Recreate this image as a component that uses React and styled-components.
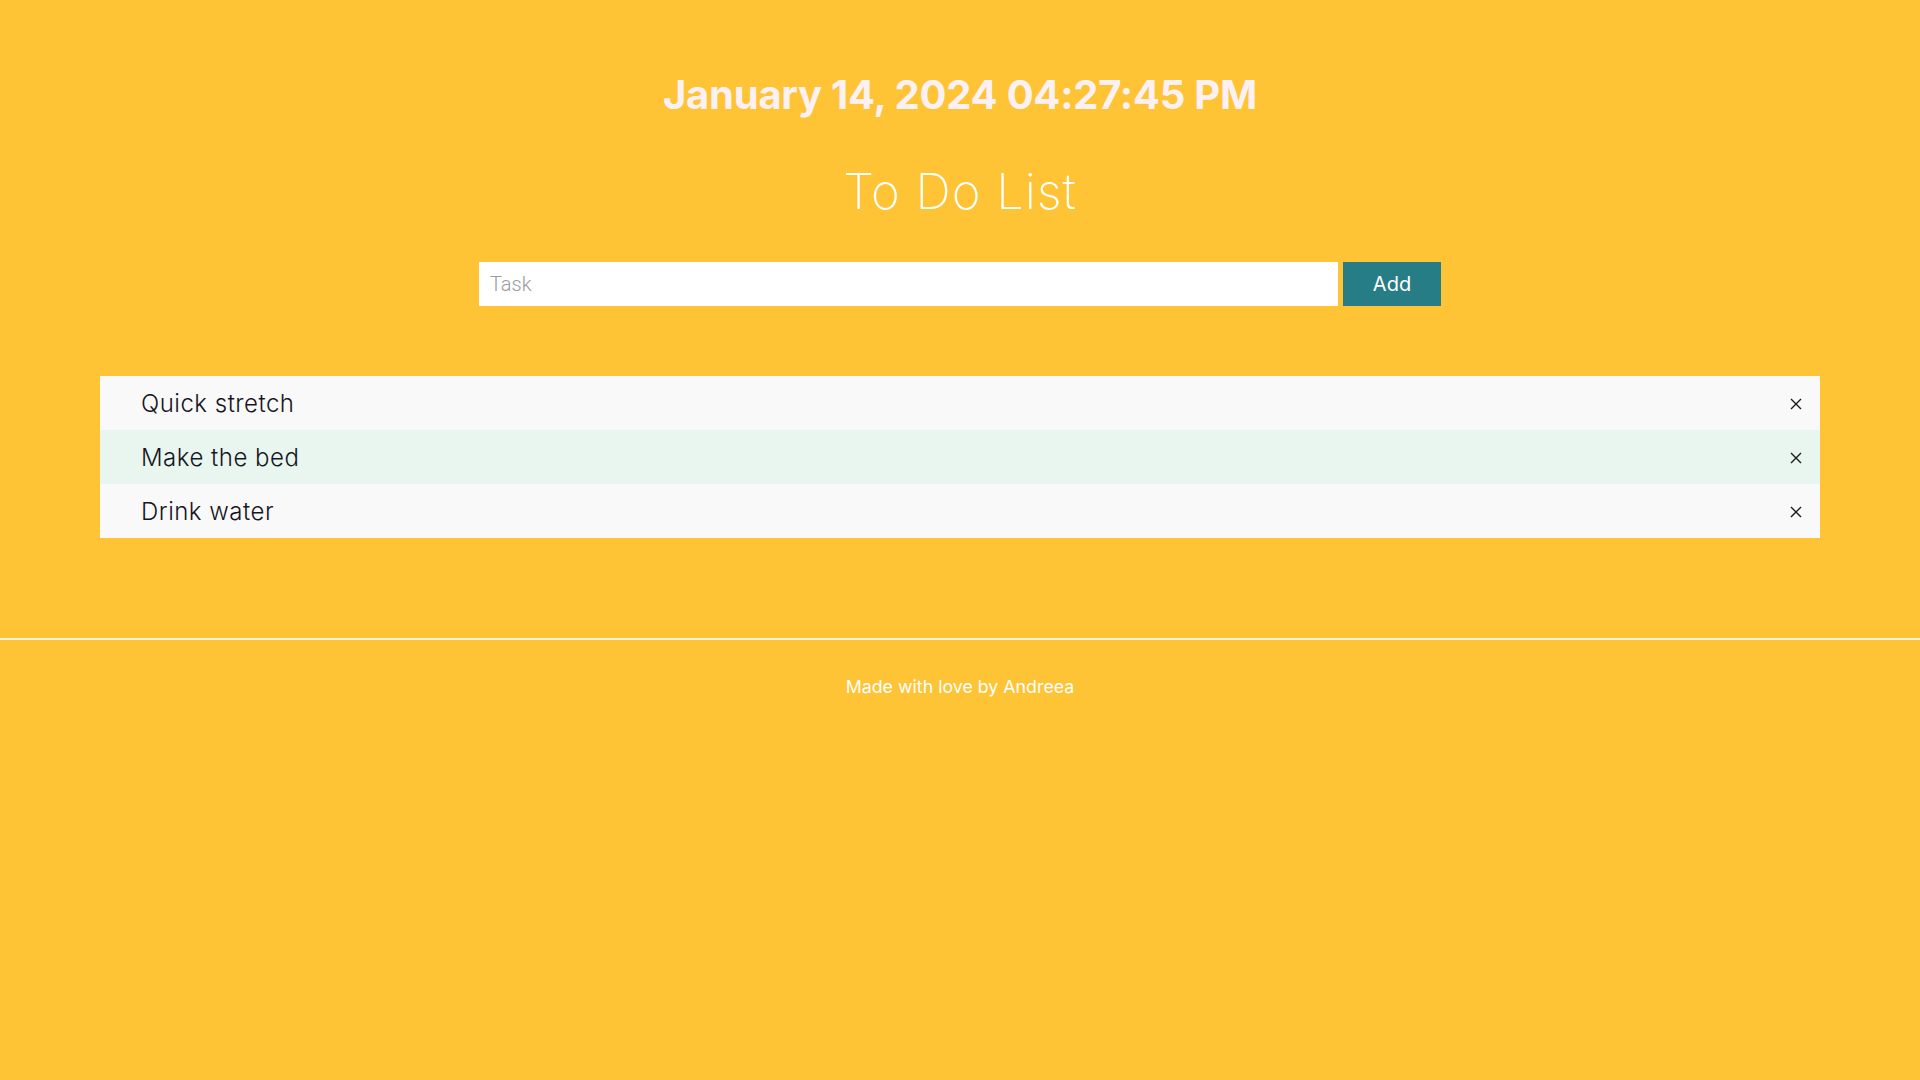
import React from "react";
import styled, { createGlobalStyle } from "styled-components";

const GlobalStyle = createGlobalStyle`
  body {
    margin: 0;
    background: #ffc436;
    font-family: Inter, "Noto Sans", sans-serif;
  }
`;

const tasks = ["Quick stretch", "Make the bed", "Drink water"];

const App = () => {
  return (
    <>
      <GlobalStyle />
      <Page>
        <DateTime>January 14, 2024 04:27:45 PM</DateTime>
        <Title>To Do List</Title>
        <Form>
          <TaskInput placeholder="Task" />
          <AddButton>Add</AddButton>
        </Form>
        <List>
          {tasks.map((task, i) => (
            <Row key={task} $alt={i % 2 === 1}>
              <span>{task}</span>
              <Remove aria-label="remove">
                <svg width="12" height="12" viewBox="0 0 12 12">
                  <path d="M1 1L11 11M11 1L1 11" stroke="#1b1b1b" strokeWidth="1.4" />
                </svg>
              </Remove>
            </Row>
          ))}
        </List>
      </Page>
      <Divider />
      <Footer>Made with love by Andreea</Footer>
    </>
  );
};

const Page = styled.div`
  padding: 71px 100px 100px;
  display: flex;
  flex-direction: column;
  align-items: center;
`;

const DateTime = styled.h2`
  margin: 0;
  font-family: Inter, sans-serif;
  font-weight: 700;
  font-size: 40px;
  line-height: 48px;
  letter-spacing: -0.25px;
  color: #fbf1f5;
`;

const Title = styled.h1`
  margin: 43px 0 0;
  font-family: Inter, sans-serif;
  font-weight: 200;
  font-size: 49px;
  line-height: 60px;
  letter-spacing: 1px;
  color: #ffffff;
`;

const Form = styled.div`
  margin-top: 40px;
  display: flex;
  gap: 5px;
`;

const TaskInput = styled.input`
  width: 859px;
  height: 44px;
  box-sizing: border-box;
  border: none;
  outline: none;
  padding: 0 11px;
  font-family: Roboto, sans-serif;
  font-weight: 300;
  font-size: 20px;
  color: #333;
  background: #ffffff;
  &::placeholder {
    color: #9a9a9a;
  }
`;

const AddButton = styled.button`
  width: 98px;
  height: 44px;
  border: none;
  background: #267d86;
  color: #ffffff;
  font-family: Inter, sans-serif;
  font-size: 20px;
  cursor: pointer;
`;

const List = styled.ul`
  list-style: none;
  margin: 70px 0 0;
  padding: 0;
  width: 100%;
`;

const Row = styled.li`
  height: 54px;
  display: flex;
  align-items: center;
  justify-content: space-between;
  padding: 0 18px 0 41px;
  background: ${(p) => (p.$alt ? "#e8f6ef" : "#f9f9f9")};
  font-family: Inter, sans-serif;
  font-weight: 300;
  font-size: 24px;
  letter-spacing: 0.5px;
  color: #16161f;
`;

const Remove = styled.button`
  border: none;
  background: none;
  padding: 0;
  margin-top: 2px;
  width: 12px;
  height: 12px;
  display: flex;
  cursor: pointer;
`;

const Divider = styled.hr`
  margin: 0;
  border: none;
  border-top: 2px solid #fff4dc;
`;

const Footer = styled.footer`
  margin-top: 35px;
  text-align: center;
  font-family: Inter, sans-serif;
  font-size: 17.8px;
  line-height: 24px;
  color: #ffffff;
`;

export default App;
